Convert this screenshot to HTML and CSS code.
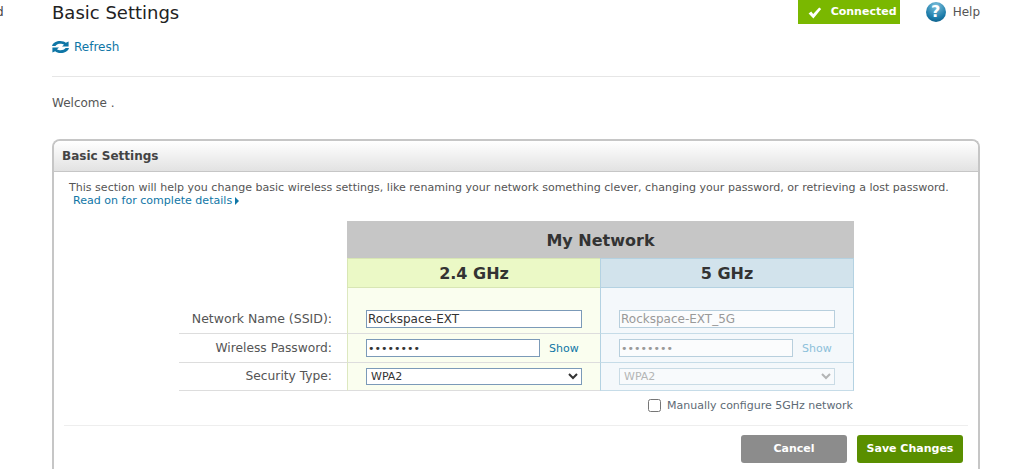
FILE: index.html
```html
<!DOCTYPE html>
<html lang="en">
<head>
<meta charset="utf-8">
<title>Basic Settings</title>
<link rel="stylesheet" href="styles.css">
</head>
<body>
<div class="page">
  <aside class="sidebar">d</aside>
  <main class="content">
    <header class="top">
      <div class="top-left">
        <h1 class="title">Basic Settings</h1>
        <a class="refresh" href="#">
          <svg class="refresh-icon" width="17" height="12" viewBox="0 0 17 12">
            <path d="M0 5 C1 1.6 4.4 0 8.2 0 C10.8 0 12.6 0.8 13.8 1.8 L16.6 0.4 L16.6 5.4 L10 5.4 L12 3.8 C10 2.4 5.4 2.2 3.4 5 Z" fill="#0f76a6"/>
            <path d="M17 7 C16 10.4 12.6 12 8.8 12 C6.2 12 4.4 11.2 3.2 10.2 L0.4 11.6 L0.4 6.6 L7 6.6 L5 8.2 C7 9.6 11.6 9.8 13.6 7 Z" fill="#0f76a6"/>
          </svg>
          <span>Refresh</span>
        </a>
      </div>
      <div class="top-right">
        <div class="status">
          <svg width="14" height="12" viewBox="0 0 14 12"><path d="M0.6 6.4 L3.2 4.6 L5.2 7 L11.2 0.6 L13.2 2 L5.4 11.4 Z" fill="#fff"/></svg>
          <span>Connected</span>
        </div>
        <a class="help" href="#">
          <span class="help-icon">?</span>
          <span>Help</span>
        </a>
      </div>
    </header>
    <hr class="rule">
    <p class="welcome">Welcome .</p>
    <section class="card">
      <h2 class="card-head">Basic Settings</h2>
      <div class="card-body">
        <p class="desc">This section will help you change basic wireless settings, like renaming your network something clever, changing your password, or retrieving a lost password.</p>
        <a class="more" href="#">Read on for complete details<span class="arrow"></span></a>
        <div class="net">
          <div class="net-title">My Network</div>
          <div class="band band-24">2.4 GHz</div>
          <div class="band band-5">5 GHz</div>

          <div class="label row-first">Network Name (SSID):</div>
          <div class="cell c24 row-first"><input class="field wide" type="text" value="Rockspace-EXT"></div>
          <div class="cell c5 row-first"><input class="field wide" type="text" value="Rockspace-EXT_5G" disabled></div>

          <div class="label">Wireless Password:</div>
          <div class="cell c24"><input class="field narrow secret" type="password" value="password"><a class="show" href="#">Show</a></div>
          <div class="cell c5"><input class="field narrow secret" type="password" value="password" disabled><a class="show off" href="#">Show</a></div>

          <div class="label row-last">Security Type:</div>
          <div class="cell c24"><select class="field wide pick"><option>WPA2</option></select></div>
          <div class="cell c5"><select class="field wide pick" disabled><option>WPA2</option></select></div>
        </div>
        <label class="manual"><input class="check" type="checkbox"><span>Manually configure 5GHz network</span></label>
        <div class="actions">
          <button class="btn cancel" type="button">Cancel</button>
          <button class="btn save" type="button">Save Changes</button>
        </div>
      </div>
    </section>
  </main>
</div>
</body>
</html>
```
FILE: styles.css
```css
* { box-sizing: border-box; }
html, body { margin: 0; height: 100%; overflow: hidden; background: #fff; }
body { font-family: "DejaVu Sans", Verdana, sans-serif; font-size: 12px; color: #555; }
a { text-decoration: none; color: #0f76a6; }

.page { display: flex; height: 469px; overflow: hidden; }
.sidebar { width: 52px; flex: none; font-size: 12px; margin-left: -4px; padding-top: 5px; color: #444; line-height: 14px; }
.content { width: 928px; flex: none; margin-left: 4px; }

.top { display: flex; justify-content: space-between; height: 76px; }
.title { margin: 3px 0 0; font-size: 18px; font-weight: 400; line-height: 20px; color: #222; }
.refresh { display: flex; align-items: center; gap: 5px; margin-top: 16px; line-height: 16px; }
.refresh-icon { display: block; }
.top-right { display: flex; align-items: flex-start; }
.status { width: 102px; height: 24px; background: #7ab800; color: #fff; font-weight: 700; font-size: 11px; display: flex; align-items: flex-start; gap: 9px; padding: 5px 0 0 10px; line-height: 13px; }
.status svg { margin-top: 2px; flex: none; }
.help { display: flex; align-items: center; gap: 7px; margin-left: 26px; margin-top: 2px; color: #555; }
.help-icon { width: 20px; height: 20px; border-radius: 50%; background: radial-gradient(circle at 50% 20%, #7cc0dc, #1a7aa8 65%, #0a5078); color: #fff; font-weight: 700; font-size: 16px; line-height: 20px; text-align: center; }

.rule { margin: 0; border: 0; border-top: 1px solid #e6e6e6; }
.welcome { margin: 18px 0 0; line-height: 16px; height: 44px; }

.card { border: 2px solid #c6c6c6; border-bottom: 0; border-radius: 8px 8px 0 0; height: 340px; }
.card-head { margin: 0; height: 31px; padding: 7px 0 0 8px; font-size: 12px; line-height: 16px; font-weight: 700; color: #444; border-bottom: 1px solid #c6c6c6; border-radius: 6px 6px 0 0; background: linear-gradient(#fff, #e2e2e2); }
.card-body { padding: 9px 10px 0; }
.desc { margin: 0 0 0 5px; font-size: 11.06px; line-height: 13px; white-space: nowrap; }
.more { display: block; margin: 0 0 0 9px; font-size: 11.06px; line-height: 13px; }
.arrow { display: inline-block; margin-left: 3px; border-left: 4px solid #0f76a6; border-top: 4px solid transparent; border-bottom: 4px solid transparent; vertical-align: -1px; }

.net { display: grid; grid-template-columns: 168px 253px 254px; grid-template-rows: 37px 30px 46px 29px 28px; margin: 14px 0 0 115px; width: 675px; }
.net-title { grid-column: 2 / 4; background: #c6c6c6; color: #333; font-size: 16px; font-weight: 700; text-align: center; line-height: 39px; }
.band { font-size: 16px; font-weight: 700; color: #333; text-align: center; line-height: 30px; border-bottom: 1px solid; }
.band-24 { grid-column: 2; background: #ebf9c6; border-color: #d8e6b4; border-left: 1px solid #d8e6b4; border-top: 1px solid #d8e6b4; }
.band-5 { background: #d2e3ec; border-color: #b4d2e2; border-left: 1px solid #b4d2e2; border-right: 1px solid #b4d2e2; border-top: 1px solid #b4d2e2; }
.label { grid-column: 1; text-align: right; padding: 0 15px 0 0; border-bottom: 1px solid #ddd; font-size: 12.25px; line-height: 28px; height: 100%; color: #555; }
.cell { display: flex; align-items: center; padding: 0 0 0 18px; border-bottom: 1px solid #ddd; }
.c24 { background: #fafeef; border-left: 1px solid #dde8c0; }
.c5 { background: #f4f8fb; border-left: 1px solid #b4d2e2; border-right: 1px solid #b4d2e2; border-bottom-color: #c6dce8; }
.row-first { align-items: flex-end; padding-bottom: 5px; }
.label.row-first { padding-bottom: 0; padding-top: 17px; font-size: 12.5px; }
.label.row-last { line-height: 26px; }

.field { height: 18px; padding: 0 1px; margin: 0; border: 1px solid #7b9ab8; border-radius: 0; background: #fff; font: 12px "DejaVu Sans", Verdana, sans-serif; color: #333; outline: 0; }
.wide { width: 216px; }
.narrow { width: 174px; }
.secret { font-size: 11px; }
.pick { height: 17px; font-size: 11px; padding-left: 0; }
.field:disabled { border-color: #b8cfdd; color: #999; background: #fbfcfd; }
.show { margin: 1px 0 0 9px; font-size: 11px; }
.show.off { color: #8cc0da; }

.manual { display: flex; justify-content: flex-end; align-items: center; gap: 6px; width: 789px; margin-top: 7px; font-size: 11px; height: 14px; color: #5d6a75; }
.check { width: 13px; height: 13px; margin: 0; }

.actions { display: flex; justify-content: flex-end; gap: 10px; margin: 13px 0 0; padding: 9px 5px 0 0; border-top: 1px solid #eee; width: 904px; }
.btn { width: 106px; height: 28px; padding: 0 0 2px; border: 0; border-radius: 3px; color: #fff; font: 700 11px "DejaVu Sans", Verdana, sans-serif; }
.cancel { background: #8c8c8c; }
.save { background: #5a8f00; }
```
